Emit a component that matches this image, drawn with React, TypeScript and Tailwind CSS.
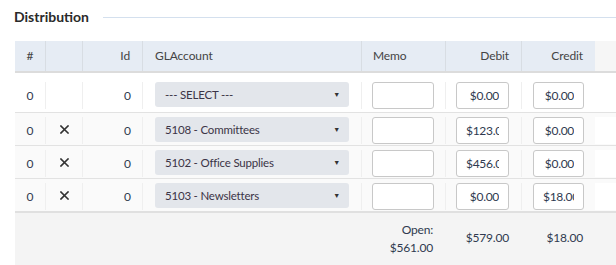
import React from "react";

type Line = {
  id: string;
  num: number;
  removable: boolean;
  account: string;
  debit: string;
  credit: string;
};

const lines: Line[] = [
  { id: "a", num: 0, removable: false, account: "--- SELECT ---", debit: "$0.00", credit: "$0.00" },
  { id: "b", num: 0, removable: true, account: "5108 - Committees", debit: "$123.00", credit: "$0.00" },
  { id: "c", num: 0, removable: true, account: "5102 - Office Supplies", debit: "$456.00", credit: "$0.00" },
  { id: "d", num: 0, removable: true, account: "5103 - Newsletters", debit: "$0.00", credit: "$18.00" }
];

const cols = "grid grid-cols-[30px_37px_60px_219px_84px_76px_74px_1fr]";

function RemoveIcon() {
  return (
    <svg width="9" height="9" viewBox="0 0 9 9" className="block">
      <path d="M1 1L8 8M8 1L1 8" stroke="#333" strokeWidth="1.6" strokeLinecap="square" />
    </svg>
  );
}

function AmountBox({ value, width }: { value: string; width: string }) {
  return (
    <input
      readOnly
      value={value}
      className={`${width} h-[27px] rounded-[3px] border border-[#c8c8c8] bg-white px-[9px] text-right text-[12px] tracking-[-0.3px] text-[#2f3a4f] outline-none`}
    />
  );
}

export default function App() {
  return (
    <div className="w-[616px] h-[265px] overflow-hidden bg-white font-['Lato',sans-serif] text-[#2f3a4f]">
      <div className="flex items-center gap-3 pl-[14px] pt-[8px] h-[26px]">
        <h2 className="text-[14px] font-bold text-[#2a2a2a] leading-none">Distribution</h2>
        <div className="ml-[2px] h-px flex-1 bg-[#d4e0ee]" />
      </div>

      <div className="mt-[15px] pl-[15px]">
        <div className={`${cols} h-[32px] border-b-2 border-[#dcdcdc] text-[12px] tracking-[-0.1px] text-[#444]`}>
          <div className="flex items-center justify-center bg-[#e6ecf4]">#</div>
          <div className="border-l border-[#d8dde3] bg-[#e6ecf4]" />
          <div className="flex items-center justify-end border-l border-[#d8dde3] bg-[#e6ecf4] px-3">Id</div>
          <div className="flex items-center border-l border-[#d8dde3] bg-[#e6ecf4] px-3">GLAccount</div>
          <div className="flex items-center border-l border-[#d8dde3] bg-[#e6ecf4] px-[11px]">Memo</div>
          <div className="flex items-center justify-end border-l border-[#d8dde3] bg-[#e6ecf4] px-3">Debit</div>
          <div className="flex items-center justify-end border-l border-[#d8dde3] bg-[#e6ecf4] px-3">Credit</div>
          <div className="bg-[#f6f6f6]" />
        </div>

        {lines.map((line, i) => (
          <div
            key={line.id}
            className={`${cols} ${i === 0 ? "pt-[9px] pb-[3px] bg-white" : "pt-[4px] pb-[1px] bg-[#fafafa] border-t border-[#e2e2e2]"} text-[12px]`}
          >
            <div className="flex items-center justify-center h-[27px]">{line.num}</div>
            <div className="flex justify-center pt-[8px] border-l border-[#efefef]">
              {line.removable ? <RemoveIcon /> : null}
            </div>
            <div className="flex items-center justify-end h-[27px] border-l border-[#efefef] px-[11px]">{line.num}</div>
            <div className="border-l border-[#efefef] px-3">
              <div className="flex h-[25px] items-center justify-between rounded-[3px] bg-[#e3e6eb] pl-[10px] pr-[9px] text-[11.5px] tracking-[-0.2px] text-[#3b3446]">
                <span>{line.account}</span>
                <span className="text-[7px] text-[#333]">▼</span>
              </div>
            </div>
            <div className="border-l border-[#efefef] pl-[10px]">
              <AmountBox value="" width="w-[62px]" />
            </div>
            <div className="border-l border-[#efefef] pl-[10px]">
              <AmountBox value={line.debit} width="w-[53px]" />
            </div>
            <div className="border-l border-[#efefef] pl-[11px]">
              <AmountBox value={line.credit} width="w-[51px]" />
            </div>
            <div className="bg-white" />
          </div>
        ))}

        <div className={`${cols} h-[60px] border-t-2 border-[#e0e0e0] bg-[#f4f4f4] text-[12px] tracking-[-0.2px] text-[#2f3a4f]`}>
          <div />
          <div />
          <div />
          <div />
          <div className="flex flex-col items-end px-3 pt-[8px] leading-[18px]">
            <span>Open:</span>
            <span>$561.00</span>
          </div>
          <div className="flex justify-end px-3 pt-[16px] leading-[18px]">$579.00</div>
          <div className="flex justify-end px-3 pt-[16px] leading-[18px]">$18.00</div>
          <div />
        </div>
      </div>
    </div>
  );
}
